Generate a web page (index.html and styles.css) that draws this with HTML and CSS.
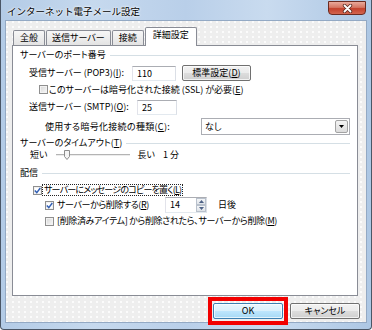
FILE: index.html
```html
<!DOCTYPE html>
<html lang="ja">
<head>
  <meta charset="UTF-8">
  <title>インターネット電子メール設定</title>
  <link rel="stylesheet" href="styles.css">
</head>
<body>
  <div class="window">
    <div class="titlebar">
      <span class="title">インターネット電子メール設定</span>
      <span class="close-btn">
        <svg width="11" height="9" viewBox="0 0 11 9">
          <path d="M2.5 1.5 L8.5 7.5 M8.5 1.5 L2.5 7.5" stroke="#5b2a22" stroke-width="3.4" stroke-linecap="round"/>
          <path d="M2.5 1.5 L8.5 7.5 M8.5 1.5 L2.5 7.5" stroke="#ffffff" stroke-width="1.8" stroke-linecap="round"/>
        </svg>
      </span>
    </div>
    <div class="client">
      <div class="tabs">
        <span class="tab">全般</span>
        <span class="tab">送信サーバー</span>
        <span class="tab">接続</span>
        <span class="tab active">詳細設定</span>
      </div>
      <div class="panel">
        <div class="group g-port">サーバーのポート番号</div>
        <div class="row r-pop">
          <span class="lbl lbl-pop">受信サーバー (POP3)(<u>I</u>):</span>
          <span class="textbox tb-pop">110</span>
          <span class="btn btn-std">標準設定(<u>D</u>)</span>
        </div>
        <div class="row r-ssl">
          <span class="check"></span>
          <span class="check-text">このサーバーは暗号化された接続 (SSL) が必要(<u>E</u>)</span>
        </div>
        <div class="row r-smtp">
          <span class="lbl lbl-smtp">送信サーバー (SMTP)(<u>O</u>):</span>
          <span class="textbox tb-smtp">25</span>
        </div>
        <div class="row r-enc">
          <span class="lbl lbl-enc">使用する暗号化接続の種類(<u>C</u>):</span>
          <span class="combo">
            <span class="combo-val">なし</span>
            <span class="combo-btn">
              <svg width="5" height="3" viewBox="0 0 5 3"><path d="M0 0H5L2.5 3Z" fill="#000"/></svg>
            </span>
          </span>
        </div>
        <div class="group g-timeout">サーバーのタイムアウト(<u>T</u>)</div>
        <div class="row r-slider">
          <span>短い</span>
          <svg class="slider" width="74" height="12" viewBox="0 0 74 12">
            <line x1="0" y1="5.5" x2="74" y2="5.5" stroke="#b4b4b4"/>
            <line x1="0" y1="6.5" x2="74" y2="6.5" stroke="#ececec"/>
            <path d="M8.5 1.5 H13.5 V7.5 L11 10.5 L8.5 7.5 Z" fill="#f4f4f4" stroke="#8c8c8c"/>
          </svg>
          <span class="long">長い</span>
          <span class="slider-val">1 分</span>
        </div>
        <div class="group g-deliver">配信</div>
        <div class="row r-keep">
          <span class="check on">
            <svg width="7" height="7" viewBox="0 0 7 7"><path d="M0.8 3.4 L2.8 5.6 L6.3 1" fill="none" stroke="#3360b4" stroke-width="1.5"/></svg>
          </span>
          <span class="focus">サーバーにメッセージのコピーを置く(<u>L</u>)</span>
        </div>
        <div class="row r-remove">
          <span class="check on">
            <svg width="7" height="7" viewBox="0 0 7 7"><path d="M0.8 3.4 L2.8 5.6 L6.3 1" fill="none" stroke="#3360b4" stroke-width="1.5"/></svg>
          </span>
          <span class="lbl-remove">サーバーから削除する(<u>R</u>)</span>
          <span class="spin">
            <span class="spin-val">14</span>
            <span class="spin-btns">
              <span class="spin-btn"><svg width="5" height="3" viewBox="0 0 5 3"><path d="M0 3H5L2.5 0Z" fill="#4d6185"/></svg></span>
              <span class="spin-btn"><svg width="5" height="3" viewBox="0 0 5 3"><path d="M0 0H5L2.5 3Z" fill="#4d6185"/></svg></span>
            </span>
          </span>
          <span class="days">日後</span>
        </div>
        <div class="row r-deleted">
          <span class="check"></span>
          <span class="check-text">[削除済みアイテム] から削除されたら、サーバーから削除(<u>M</u>)</span>
        </div>
      </div>
      <div class="buttons">
        <span class="btn btn-ok">OK</span>
        <span class="btn btn-cancel">キャンセル</span>
      </div>
    </div>
  </div>
</body>
</html>
```

FILE: styles.css
```css
* {
  box-sizing: border-box;
}

body {
  margin: 0;
  width: 372px;
  height: 330px;
  overflow: hidden;
  font-family: "Noto Sans CJK JP", "Noto Sans", sans-serif;
  font-size: 9px;
  color: #000;
  font-feature-settings: "palt";
}

u {
  text-underline-offset: 1px;
}

/* glass frame */
.window {
  height: 330px;
  display: flex;
  flex-direction: column;
  padding: 0 4px 6px 4px;
  border: 1px solid #4a5666;
  border-top: none;
  border-radius: 0 0 4px 4px;
  background: linear-gradient(to right, #b3cbe6 0%, #c6d9ee 25%, #b9cfe9 50%, #c9dbef 72%, #adc7e4 100%);
}

.titlebar {
  height: 20px;
  display: flex;
  justify-content: space-between;
  align-items: flex-start;
}

.title {
  padding: 2px 0 0 2px;
  line-height: 18px;
  font-size: 9.5px;
  font-feature-settings: normal;
  text-shadow: 0 0 3px #fff, 0 0 2px #fff;
}

.close-btn {
  width: 38px;
  height: 14px;
  margin: 1px 1px 0 0;
  border: 1px solid #6b2a20;
  border-radius: 0 0 4px 4px;
  background: linear-gradient(#e9a99b, #d57663 45%, #c3412c 55%, #d3664f);
  display: flex;
  align-items: center;
  justify-content: center;
}

/* dialog body */
.client {
  flex: 1;
  display: flex;
  flex-direction: column;
  padding: 6px 8px 3px 6px;
  border: 1px solid #93a9c4;
  background-color: #eeeeee;
  background-image: radial-gradient(circle at 1px 1px, #fbfbfb 0.7px, transparent 1px);
  background-size: 6px 5px;
}

.tabs {
  height: 18px;
  display: flex;
  align-items: flex-end;
  padding-left: 1px;
}

.tab {
  min-width: 32px;
  height: 15px;
  line-height: 13px;
  padding: 0 5px;
  margin-right: 1px;
  text-align: center;
  border: 1px solid #898c95;
  border-bottom: none;
  border-radius: 2px 2px 0 0;
  background: linear-gradient(#f7f7f7, #e3e3e3);
}

.tab.active {
  height: 19px;
  line-height: 14px;
  padding: 0 7px;
  margin-bottom: -1px;
  background: #fff;
  position: relative;
  z-index: 1;
}

.panel {
  height: 251px;
  padding: 3px 7px 0 7px;
  border: 1px solid #898c95;
  background: #fff;
}

.group {
  display: flex;
  align-items: center;
  height: 12px;
  line-height: 12px;
}

.group::after {
  content: "";
  flex: 1;
  height: 1px;
  margin-left: 4px;
  background: #d5dfe5;
}

.row {
  display: flex;
  align-items: center;
  line-height: 12px;
}

.r-pop {
  height: 16px;
  margin-top: 4px;
  padding-left: 9px;
}

.r-ssl {
  height: 13px;
  margin-top: 2px;
  padding-left: 19px;
}

.r-smtp {
  height: 16px;
  margin-top: 3px;
  padding-left: 9px;
}

.r-enc {
  height: 17px;
  margin-top: 3px;
  padding-left: 25px;
}

.g-timeout {
  margin-top: 2px;
}

.r-slider {
  height: 12px;
  padding-left: 10px;
}

.g-deliver {
  margin-top: 6px;
}

.r-keep {
  height: 12px;
  margin-top: 5px;
  padding-left: 13px;
}

.r-remove {
  height: 16px;
  margin-top: 1px;
  padding-left: 25px;
}

.r-deleted {
  height: 12px;
  margin-top: 2px;
  padding-left: 25px;
}

.lbl {
  flex: none;
}

.lbl-pop {
  width: 103px;
}

.lbl-smtp {
  width: 108px;
}

.lbl-enc {
  width: 156px;
  letter-spacing: 0.3px;
}

.textbox {
  height: 15px;
  line-height: 13px;
  padding-left: 4px;
  border: 1px solid;
  border-color: #abadb3 #dbdfe6 #e3e9ef #e2e3ea;
  background: #fff;
}

.tb-pop {
  width: 44px;
}

.tb-smtp {
  width: 40px;
}

/* push buttons */
.btn {
  height: 16px;
  line-height: 14px;
  text-align: center;
  border: 1px solid #707070;
  border-radius: 2px;
  background: linear-gradient(#f2f2f2 0%, #ebebeb 50%, #dddddd 51%, #cfcfcf 100%);
  box-shadow: inset 0 0 0 1px rgba(255, 255, 255, 0.7);
}

.btn-std {
  width: 69px;
  margin-left: 6px;
}

.check {
  flex: none;
  width: 9px;
  height: 9px;
  border: 1px solid #8f8f8f;
  background: linear-gradient(135deg, #d6d6d6, #f8f8f8);
  box-shadow: inset 0 0 0 1px #f2f2f2;
  display: flex;
  align-items: center;
  justify-content: center;
}

.check.on {
  background: #fff;
}

.r-ssl .check-text {
  margin-left: 1px;
}

.r-deleted .check-text {
  margin-left: 3px;
  letter-spacing: -0.35px;
}

.combo {
  width: 153px;
  height: 17px;
  display: flex;
  align-items: center;
  border: 1px solid #abadb3;
  background: #fff;
}

.combo-val {
  flex: 1;
  padding-left: 3px;
}

.combo-btn {
  width: 13px;
  height: 13px;
  margin-right: 1px;
  border: 1px solid #a3a3a3;
  border-radius: 2px;
  background: linear-gradient(#f4f4f4, #dcdcdc);
  display: flex;
  align-items: center;
  justify-content: center;
}

.slider {
  margin-left: 8px;
}

.long {
  margin-left: 8px;
}

.slider-val {
  margin-left: 8px;
}

.focus {
  border: 1px dotted #222;
  line-height: 10px;
  padding: 0 1px;
  letter-spacing: -0.8px;
}

.lbl-remove {
  width: 108px;
  margin-left: 3px;
  letter-spacing: -0.4px;
}

.spin {
  width: 42px;
  height: 16px;
  display: flex;
  border: 1px solid;
  border-color: #abadb3 #dbdfe6 #e3e9ef #e2e3ea;
  background: #fff;
}

.spin-val {
  flex: 1;
  padding-left: 4px;
  line-height: 14px;
}

.spin-btns {
  width: 10px;
  display: flex;
  flex-direction: column;
}

.spin-btn {
  flex: 1;
  border: 1px solid #b9c1cc;
  background: linear-gradient(#f4f6f8, #dfe3e8);
  display: flex;
  align-items: center;
  justify-content: center;
}

.days {
  margin-left: 11px;
}

.buttons {
  display: flex;
  justify-content: flex-end;
  gap: 7px;
  margin-top: 7px;
  margin-right: -2px;
}

.btn-ok,
.btn-cancel {
  width: 70px;
}

.btn-ok {
  position: relative;
  border-color: #3c7fb1;
  background: linear-gradient(#eaf6fd 0%, #d9f0fc 50%, #bee6fd 51%, #a7d9f5 100%);
}

/* red highlight drawn over the dialog */
.btn-ok::after {
  content: "";
  position: absolute;
  left: -6px;
  right: -6px;
  top: -7px;
  bottom: -7px;
  border: 4px solid #f20000;
}
```
